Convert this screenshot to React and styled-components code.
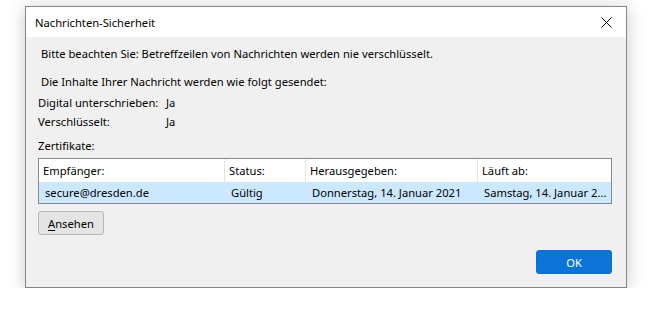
import styled, { createGlobalStyle } from 'styled-components';

const GlobalStyle = createGlobalStyle`
  body {
    margin: 0;
    background: #ffffff;
    font-family: 'Noto Sans', 'Open Sans', sans-serif;
    font-size: 11.2px;
    color: #000;
  }
`;

const columns = [
  { title: 'Empfänger:', width: 186, value: 'secure@dresden.de' },
  { title: 'Status:', width: 81, value: 'Gültig' },
  { title: 'Herausgegeben:', width: 172, value: 'Donnerstag, 14. Januar 2021' },
  { title: 'Läuft ab:', width: 133, value: 'Samstag, 14. Januar 2...' },
];

export default function App() {
  return (
    <Page>
      <GlobalStyle />
      <Dialog>
        <TitleBar>
          <span>Nachrichten-Sicherheit</span>
          <Close>
            <svg width='11' height='11' viewBox='0 0 11 11'>
              <path d='M0.5 0.5 L10.5 10.5 M10.5 0.5 L0.5 10.5' stroke='#000' strokeWidth='1' />
            </svg>
          </Close>
        </TitleBar>
        <Body>
          <Line indent>Bitte beachten Sie: Betreffzeilen von Nachrichten werden nie verschlüsselt.</Line>
          <Line indent className='gap'>Die Inhalte Ihrer Nachricht werden wie folgt gesendet:</Line>
          <Info>
            <span>Digital unterschrieben:</span>
            <span>Ja</span>
            <span>Verschlüsselt:</span>
            <span>Ja</span>
          </Info>
          <Line className='certs'>Zertifikate:</Line>
          <Table>
            <Row header>
              {columns.map((c) => (
                <Cell header key={c.title} style={{ width: c.width }}>
                  {c.title}
                </Cell>
              ))}
            </Row>
            <Row selected>
              {columns.map((c) => (
                <Cell key={c.title} style={{ width: c.width }}>
                  {c.value}
                </Cell>
              ))}
            </Row>
          </Table>
          <Button>
            <u>A</u>nsehen
          </Button>
          <Footer>
            <Button primary>OK</Button>
          </Footer>
        </Body>
      </Dialog>
    </Page>
  );
}

const Page = styled.div`
  padding: 6px 0 0 25px;
`;

const Dialog = styled.div`
  width: 600px;
  height: 280px;
  border: 1px solid #858585;
  background: #f0f0f0;
  box-shadow: 0 2px 16px rgba(0, 0, 0, 0.22);
  display: flex;
  flex-direction: column;
`;

const TitleBar = styled.div`
  height: 30px;
  background: #fff;
  display: flex;
  align-items: center;
  justify-content: space-between;
  padding: 0 10px 0 9px;
`;

const Close = styled.div`
  display: flex;
  align-items: center;
  margin-right: 4px;
`;

const Body = styled.div`
  flex: 1;
  display: flex;
  flex-direction: column;
  align-items: flex-start;
  padding: 7px 14px 13px 12px;

  .gap {
    margin-top: 8px;
  }

  .certs {
    margin-top: 5px;
  }
`;

const Line = styled.div`
  line-height: 20px;
  white-space: nowrap;
  padding-left: ${(p) => (p.indent ? '3px' : '0')};
`;

const Info = styled.div`
  display: grid;
  grid-template-columns: 128px auto;
  line-height: 19px;
  margin-top: 1px;
  white-space: nowrap;
`;

const Table = styled.div`
  margin-top: 2px;
  width: 572px;
  border: 1px solid #828790;
  background: #fff;
`;

const Row = styled.div`
  display: flex;
  height: ${(p) => (p.header ? '23px' : '21px')};
  background: ${(p) => (p.selected ? '#cce8ff' : '#fff')};
`;

const Cell = styled.div`
  box-sizing: border-box;
  display: flex;
  align-items: center;
  padding-left: ${(p) => (p.header ? '4px' : '6px')};
  white-space: nowrap;
  overflow: hidden;
  border-right: ${(p) => (p.header ? '1px solid #e5e5e5' : 'none')};

  &:last-child {
    border-right: none;
  }
`;

const Button = styled.button`
  margin-top: 7px;
  width: ${(p) => (p.primary ? '76px' : '66px')};
  height: 24px;
  font-family: inherit;
  font-size: 11.2px;
  border-radius: 3px;
  border: 1px solid ${(p) => (p.primary ? '#0a6fcf' : '#b7b7b7')};
  background: ${(p) => (p.primary ? '#0b74d6' : '#e4e4e4')};
  color: ${(p) => (p.primary ? '#fff' : '#000')};
  padding: 0;

  u {
    text-decoration-thickness: 1px;
    text-underline-offset: 2px;
  }
`;

const Footer = styled.div`
  margin-top: auto;
  align-self: stretch;
  display: flex;
  justify-content: flex-end;

  button {
    margin-top: 0;
  }
`;
